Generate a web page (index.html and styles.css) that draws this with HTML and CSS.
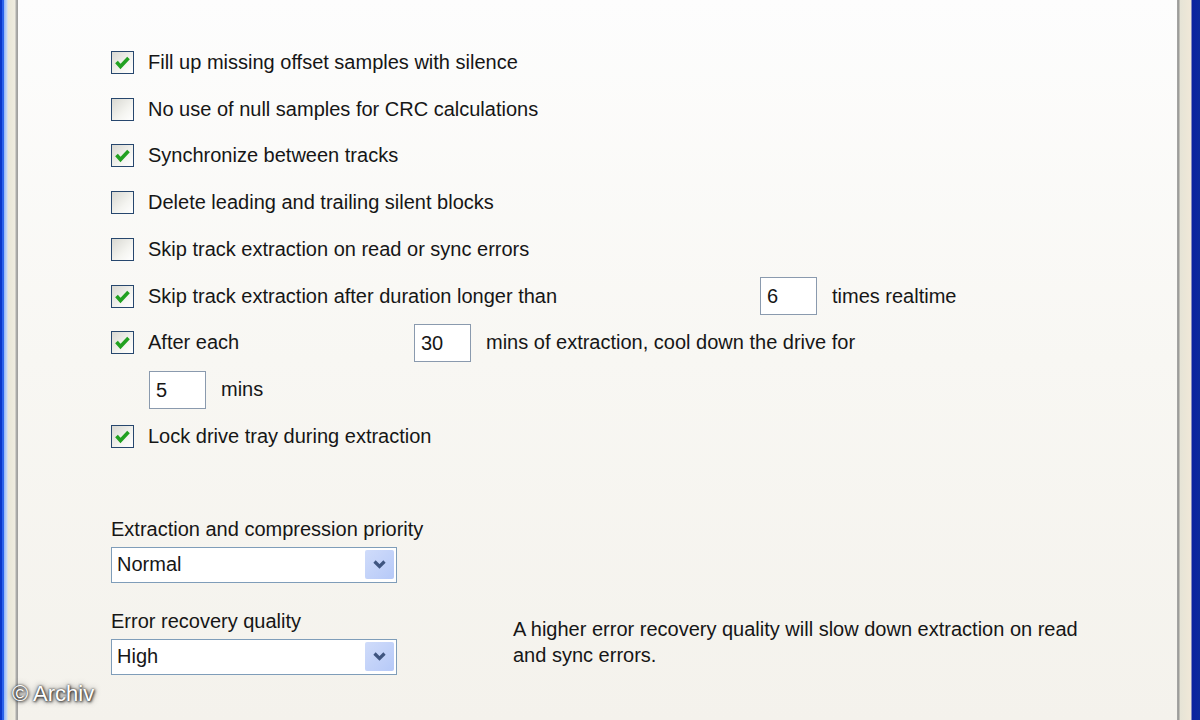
FILE: index.html
```html
<!DOCTYPE html>
<html lang="en">
<head>
  <meta charset="UTF-8" />
  <title>Extraction options</title>
  <link rel="stylesheet" href="styles.css">
</head>
<body>
  <div class="window">
    <div class="frame-left"></div>

    <main class="page">
      <ul class="options">
        <li class="option">
          <span class="check on"></span>
          <span>Fill up missing offset samples with silence</span>
        </li>
        <li class="option">
          <span class="check"></span>
          <span>No use of null samples for CRC calculations</span>
        </li>
        <li class="option">
          <span class="check on"></span>
          <span>Synchronize between tracks</span>
        </li>
        <li class="option">
          <span class="check"></span>
          <span>Delete leading and trailing silent blocks</span>
        </li>
        <li class="option">
          <span class="check"></span>
          <span>Skip track extraction on read or sync errors</span>
        </li>
        <li class="option">
          <span class="check on"></span>
          <span class="lead lead-wide">Skip track extraction after duration longer than</span>
          <span class="field">6</span>
          <span>times realtime</span>
        </li>
        <li class="option">
          <span class="check on"></span>
          <span class="lead">After each</span>
          <span class="field">30</span>
          <span>mins of extraction, cool down the drive for</span>
        </li>
        <li class="option indent">
          <span class="field">5</span>
          <span>mins</span>
        </li>
        <li class="option">
          <span class="check on"></span>
          <span>Lock drive tray during extraction</span>
        </li>
      </ul>

      <div class="settings">
        <div class="setting">
          <div class="setting-label">Extraction and compression priority</div>
          <div class="combo">
            <span>Normal</span>
            <span class="combo-btn"><svg viewBox="0 0 29 29" width="29" height="29"><path d="M9.5 11.5 L14.5 16.5 L19.5 11.5" fill="none" stroke="#3f5580" stroke-width="3.2"/></svg></span>
          </div>
        </div>

        <div class="setting-row">
          <div class="setting">
            <div class="setting-label">Error recovery quality</div>
            <div class="combo">
              <span>High</span>
              <span class="combo-btn"><svg viewBox="0 0 29 29" width="29" height="29"><path d="M9.5 11.5 L14.5 16.5 L19.5 11.5" fill="none" stroke="#3f5580" stroke-width="3.2"/></svg></span>
            </div>
          </div>
          <p class="hint">A higher error recovery quality will slow down extraction on read and sync errors.</p>
        </div>
      </div>
    </main>

    <div class="frame-right"></div>

    <div class="credit">© Archiv</div>
  </div>
</body>
</html>
```

FILE: styles.css
```css
body {
  margin: 0;
  font-family: 'Liberation Sans', Arial, sans-serif;
  color: #161616;
}

.window {
  position: relative;
  display: flex;
  width: 1200px;
  height: 720px;
  overflow: hidden;
}

.frame-left {
  width: 18px;
  flex-shrink: 0;
  background: linear-gradient(to right,
    #0a36c8 0, #0a36c8 2px,
    #2a62ec 2px, #2a62ec 4px,
    #8fb4f6 4px, #c9dbf8 7px,
    #e8e6d6 8px, #efece0 15px,
    #b0b0ae 16px, #9c9c9a 18px);
}

.frame-right {
  width: 23px;
  flex-shrink: 0;
  background: linear-gradient(to right,
    #a6a6a4 0, #9a9a98 2px,
    #e6e4d6 3px, #f0e8d8 14px,
    #0a22a0 15px, #0c2a9c 23px);
}

.page {
  flex: 1;
  padding: 39px 0 0 93px;
  background: linear-gradient(to bottom, #fdfdfd, #f8f7f3 50%, #f4f2ec);
}

.options {
  list-style: none;
  margin: 0;
  padding: 0;
}

.option {
  display: flex;
  align-items: center;
  height: 46.75px;
  font-size: 20px;
}

.option.indent {
  padding-left: 38px;
}

.check {
  width: 21px;
  height: 21px;
  margin-right: 14px;
  border: 1px solid #27476e;
  background: linear-gradient(135deg, #d8d8d2, #f4f4f0 60%, #ffffff);
  flex-shrink: 0;
}

.check.on {
  background-image:
    url("data:image/svg+xml;utf8,<svg xmlns='http://www.w3.org/2000/svg' viewBox='0 0 21 21'><path d='M4.5 10 L8.5 14.5 L16.5 6' fill='none' stroke='%2321a121' stroke-width='3.6'/></svg>"),
    linear-gradient(135deg, #d8d8d2, #f4f4f0 60%, #ffffff);
}

.lead {
  width: 266px;
}

.lead-wide {
  width: 612px;
}

.field {
  width: 49px;
  height: 36px;
  line-height: 36px;
  padding-left: 6px;
  margin-right: 15px;
  border: 1px solid #8a9aae;
  background: #ffffff;
  flex-shrink: 0;
}

.settings {
  margin-top: 57px;
  font-size: 20px;
}

.setting {
  width: 286px;
}

.setting-label {
  height: 24px;
  line-height: 24px;
  margin-bottom: 6px;
  white-space: nowrap;
}

.combo {
  display: flex;
  align-items: center;
  justify-content: space-between;
  height: 34px;
  padding: 0 2px 0 5px;
  border: 1px solid #7f9db9;
  background: #ffffff;
}

.combo-btn {
  width: 29px;
  height: 29px;
  background: linear-gradient(135deg, #d0dcfa, #b6c9f8);
  border-radius: 2px;
}

.combo-btn svg {
  display: block;
}

.setting-row {
  display: flex;
  align-items: flex-start;
  gap: 116px;
  margin-top: 26px;
}

.hint {
  width: 585px;
  margin: 7px 0 0;
  line-height: 26px;
}

.credit {
  position: absolute;
  left: 12px;
  top: 681px;
  font-size: 22px;
  color: #ffffff;
  text-shadow: 0 0 2px #333, 1px 1px 3px #222, 0 0 6px #555;
}
```
